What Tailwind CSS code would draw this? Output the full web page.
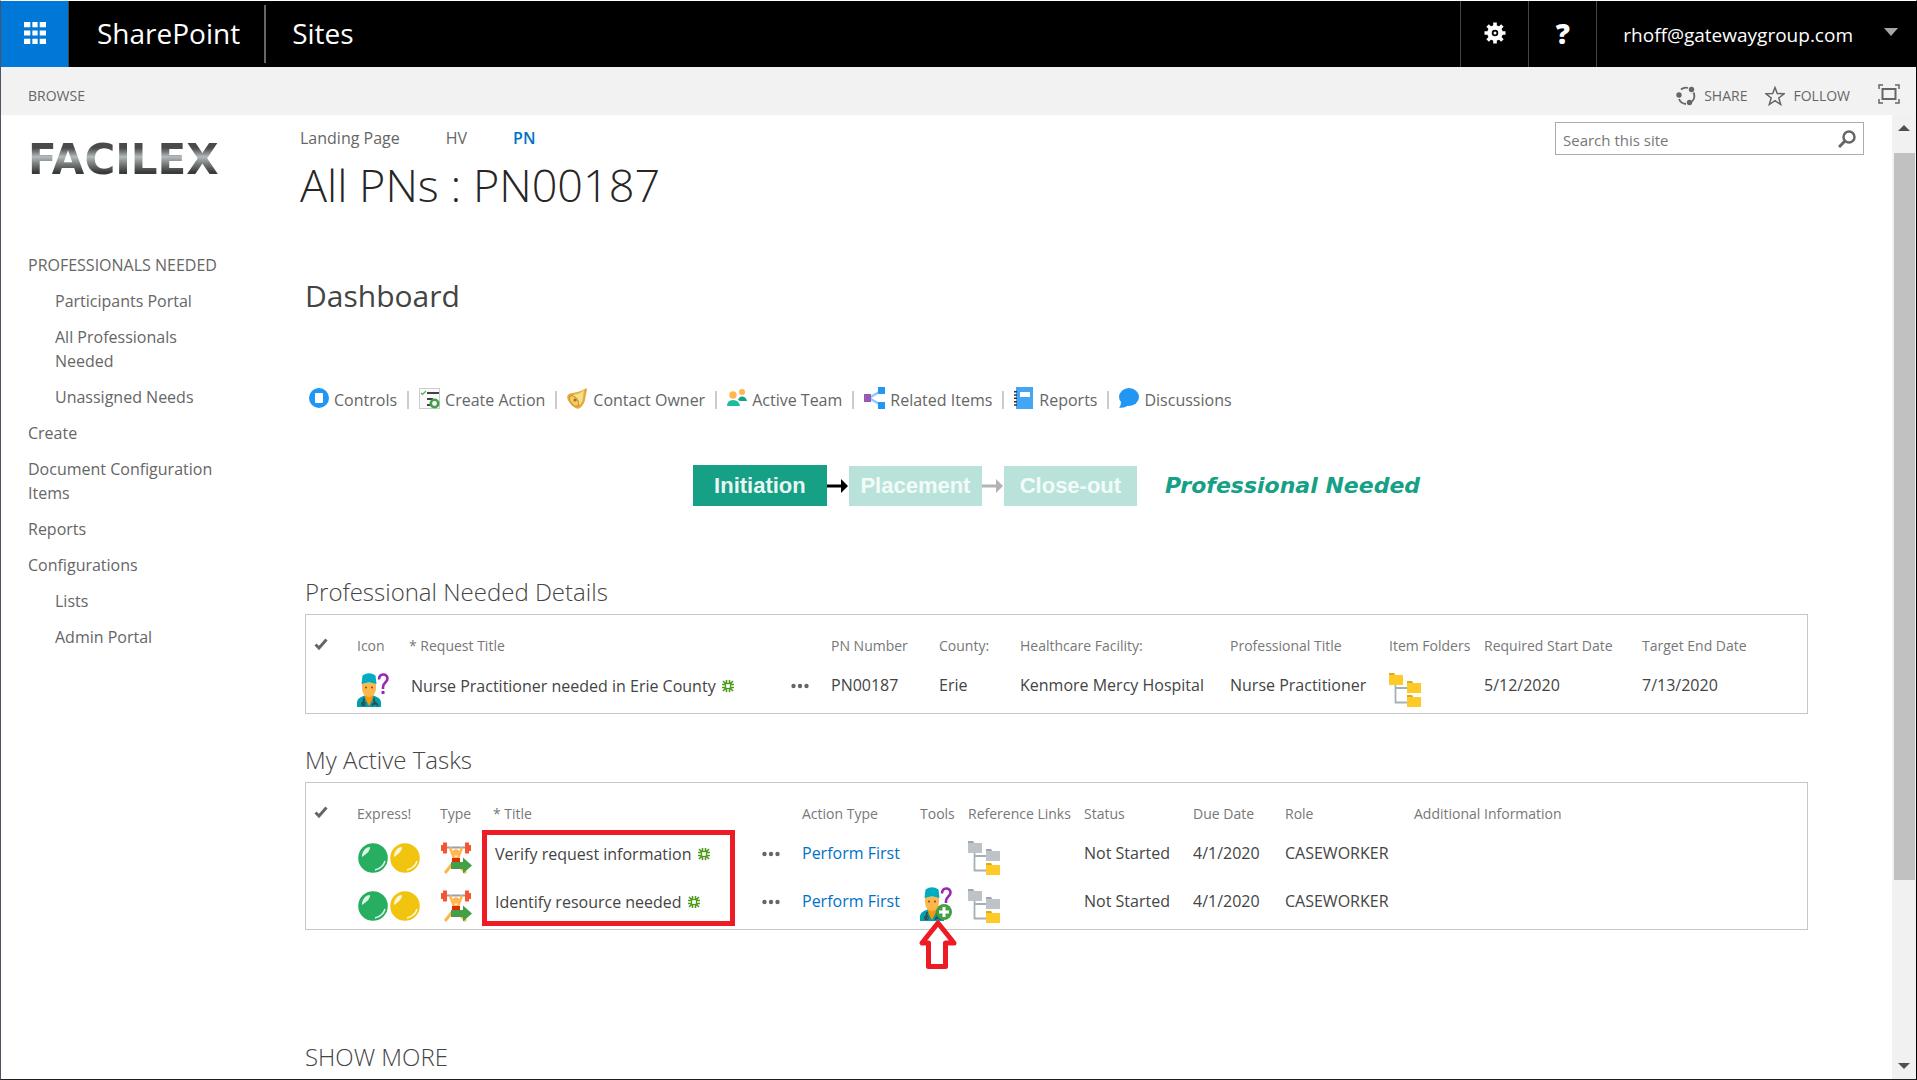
<!DOCTYPE html>
<html lang="en">
<head>
    <meta charset="UTF-8">
    <meta name="viewport" content="width=device-width, initial-scale=1.0">
    <title>All PNs : PN00187</title>
    <script src="https://cdn.jsdelivr.net/npm/@tailwindcss/browser@4"></script>
</head>
<body class="bg-white font-['Open_Sans','Noto_Sans',sans-serif] text-base text-[#666666]">
    <!-- Shared icons -->
    <svg class="hidden">
        <symbol id="check" viewBox="0 0 14 12">
            <path d="M1.500 6.500 5 10 12.500 1.500" fill="none" stroke="#666" stroke-width="3"/>
        </symbol>
        <symbol id="new-item" viewBox="0 0 12 12">
            <path d="M1 1l3 3M11 1 8 4M1 11l3-3M11 11 8 8M4.500 0v3M7.500 0v3M4.500 12V9M7.500 12V9M0 4.500h3M0 7.500h3M12 4.500H9M12 7.500H9" stroke="#4f9a1b" stroke-width="1.600"/>
            <rect x="3.500" y="3.500" width="5" height="5" fill="none" stroke="#4f9a1b" stroke-width="1.300"/>
        </symbol>
        <symbol id="dots" viewBox="0 0 18 6">
            <circle cx="2.500" cy="3" r="2.200" fill="#666"/><circle cx="9" cy="3" r="2.200" fill="#666"/><circle cx="15.500" cy="3" r="2.200" fill="#666"/>
        </symbol>
        <symbol id="nurse" viewBox="0 0 32 34">
            <path d="M0 34v-4c0-4 3-6 8-7.500h8c5 1.500 8 3.500 8 7.500v4z" fill="#00a0ae"/>
            <path d="M7.500 21h9l-1 5-3.500 7-3.500-7z" fill="#ff9800"/>
            <path d="M5 10h14v5c0 5-3 9-7 9s-7-4-7-9z" fill="#ffb74d"/>
            <path d="M4.500 11 5.500 2.500Q12-2 18.500 2.500l1 8.500q-7.500-3-15 0z" fill="#00acc1"/>
            <circle cx="9" cy="14.500" r="1" fill="#784719"/><circle cx="15" cy="14.500" r="1" fill="#784719"/>
            <path d="M7 25c0 3-1 4-1 7M17 25c0 3 1 4 1 7" fill="none" stroke="#37474f" stroke-width="1.600"/>
            <circle cx="6.500" cy="31" r="1.800" fill="none" stroke="#37474f" stroke-width="1.200"/>
            <path d="M15.500 33c0-4 5-4 5 0" fill="none" stroke="#37474f" stroke-width="1.600"/>
            <path d="M22 6.500C22 0 30.500 0 30.500 5.500c0 4-4.500 4-4.500 8.500v2" fill="none" stroke="#9c27b0" stroke-width="2.600"/>
            <rect x="24.500" y="18" width="3" height="3" fill="#9c27b0"/>
        </symbol>
        <symbol id="weights" viewBox="0 0 32 34">
            <path d="M2 6.500h28" stroke="#90a4ae" stroke-width="2"/>
            <path d="M3 1.500h4v11H3zM25 1.500h4v11h-4zM1 4h2v6H1zM29 4h2v6h-2z" fill="#f4562f"/>
            <path d="M10 6.500 14 17h4l4-10.500" fill="none" stroke="#ffb74d" stroke-width="2.600"/>
            <circle cx="16" cy="11.500" r="3.200" fill="#ffb74d"/>
            <path d="M13 22 5 32M18 24l8 8" stroke="#ffb74d" stroke-width="3"/>
            <path d="M12 17h8v6h-8z" fill="#dd2c00"/>
            <path d="M11 21h12v-4.500l9 8-9 8V28H11z" fill="#43a047"/>
        </symbol>
        <symbol id="ball-green" viewBox="0 0 32 32">
            <circle cx="16" cy="16" r="14.800" fill="#27ae60"/>
            <path d="M5 13Q7 5 13 5q1 4-8 10z" fill="#fff" opacity=".85"/>
            <path d="M18 28q8-2 10-9" fill="none" stroke="#fff" stroke-width="1.500" opacity=".85"/>
        </symbol>
        <symbol id="ball-yellow" viewBox="0 0 32 32">
            <circle cx="16" cy="16" r="14.800" fill="#f1c40f"/>
            <path d="M5 13Q7 5 13 5q1 4-8 10z" fill="#fff" opacity=".85"/>
            <path d="M18 28q8-2 10-9" fill="none" stroke="#fff" stroke-width="1.500" opacity=".85"/>
        </symbol>
        <symbol id="folder" viewBox="0 0 14 12">
            <path d="M0 0h5l1.500 2H13v5H0z" fill="currentColor"/>
            <path d="M0 2h14v10H0z" fill="currentColor"/>
            <path d="M0 0h5l1 2H0z" fill="#000" opacity=".15"/>
        </symbol>
        <symbol id="tree-lines" viewBox="0 0 32 34">
            <path d="M6.500 11v18.500H20M6.500 15H20" fill="none" stroke="#a3b2ba" stroke-width="1.800"/>
        </symbol>
    </svg>

    <div class="flex h-screen flex-col border-x border-b border-t border-t-white border-r-black border-b-[#1f1f1f] border-l-[#4b5563]">
        <!-- Suite bar -->
        <header class="flex h-[66px] shrink-0 items-stretch bg-black text-white">
            <button type="button" aria-label="App launcher" class="flex w-[68px] items-center justify-center border-r border-[#444444] bg-[#0078d7] pb-0.5">
                <svg class="h-[22px] w-[22px]" viewBox="0 0 21 21" fill="#fff">
                    <path d="M0 0h6v5H0zM8 0h5v5H8zM15 0h6v5h-6zM0 8h6v5H0zM8 8h5v5H8zM15 8h6v5h-6zM0 16h6v5H0zM8 16h5v5H8zM15 16h6v5h-6z"/>
                </svg>
            </button>
            <a href="#" class="flex items-center pb-0.5 pl-7 text-[28px]">SharePoint</a>
            <span class="my-1 ml-6 w-[2px] self-stretch bg-[#666666]"></span>
            <a href="#" class="flex items-center pb-0.5 pl-[26px] text-[28px]">Sites</a>
            <div class="ml-auto flex">
                <button type="button" aria-label="Settings" class="flex w-[68px] items-center justify-center border-l border-[#444444] pb-0.5">
                    <svg class="h-[22px] w-[22px]" viewBox="0 0 22 22">
                        <circle cx="11" cy="11" r="5.500" fill="none" stroke="#fff" stroke-width="4.500"/>
                        <path d="M11 .5V5M11 17v4.500M.5 11H5M17 11h4.500M3.600 3.600l3 3M15.400 15.400l3 3M3.600 18.400l3-3M15.400 6.600l3-3" stroke="#fff" stroke-width="3.600"/>
                        <circle cx="11" cy="11" r="1.500" fill="#fff"/>
                    </svg>
                </button>
                <button type="button" aria-label="Help" class="flex w-[68px] items-center justify-center border-l border-[#444444] pb-0.5 text-[28px] font-extrabold">?</button>
                <button type="button" class="flex items-center border-l border-[#444444] pl-[26px] pr-[18px] pt-0.5 text-[19px]">
                    rhoff@gatewaygroup.com
                    <svg class="mb-1.5 ml-[31px] h-2 w-[14px]" viewBox="0 0 14 8"><path d="M0 0h14L7 8z" fill="#a6a6a6"/></svg>
                </button>
            </div>
        </header>

        <!-- Ribbon -->
        <div class="flex h-12 shrink-0 items-center bg-[#f2f2f2] pl-[27px] pr-4 pt-2.5 text-sm">
            <a href="#" class="mr-auto">BROWSE</a>
            <button type="button" class="flex items-center gap-2">
                <svg class="h-5 w-5" viewBox="0 0 20 20">
                    <path d="M5 3.500A8 8 0 0 1 12 2M17.500 6.500A8 8 0 0 1 16 15.500M10 18A8 8 0 0 1 3 13" fill="none" stroke="#666" stroke-width="1.800"/>
                    <circle cx="15.500" cy="3.500" r="2.700" fill="#666"/><circle cx="3" cy="9" r="2.700" fill="#666"/><circle cx="13.500" cy="16.500" r="2.700" fill="#666"/>
                </svg>
                SHARE
            </button>
            <button type="button" class="ml-[18px] flex items-center gap-2">
                <svg class="h-5 w-5" viewBox="0 0 20 20"><path d="M10 1.500 12.300 7.600 19 7.800 13.800 12l1.900 6.500L10 14.700l-5.700 3.800L6.200 12 1 7.800l6.700-.2z" fill="none" stroke="#666" stroke-width="1.500"/></svg>
                FOLLOW
            </button>
            <button type="button" aria-label="Focus on content" class="mb-1 ml-7">
                <svg class="h-5 w-[22px]" viewBox="0 0 22 20" fill="none" stroke="#666" stroke-width="1.500"><path d="M1 5V1h4M17 1h4v4M1 15v4h4M21 15v4h-4"/><rect x="4.500" y="5" width="13" height="10" stroke-width="2"/></svg>
            </button>
        </div>

        <div class="flex min-h-0 flex-1">
            <!-- Quick launch -->
            <aside class="w-[299px] shrink-0 pl-[27px]">
                <a href="#" class="mt-[22px] flex h-11 w-fit items-center bg-linear-to-b from-[#4a4a4a] from-25% via-[#b4bbbd] via-45% to-[#3a3a3a] to-80% bg-clip-text font-['DejaVu_Sans'] text-[42px] font-bold text-transparent">FACILEX</a>
                <nav class="mt-[66px] w-[210px] leading-6">
                    <a href="#" class="block py-1.5">PROFESSIONALS NEEDED</a>
                    <a href="#" class="ml-[27px] block py-1.5">Participants Portal</a>
                    <a href="#" class="ml-[27px] block py-1.5">All Professionals<br>Needed</a>
                    <a href="#" class="ml-[27px] block py-1.5">Unassigned Needs</a>
                    <a href="#" class="block py-1.5">Create</a>
                    <a href="#" class="block py-1.5">Document Configuration Items</a>
                    <a href="#" class="block py-1.5">Reports</a>
                    <a href="#" class="block py-1.5">Configurations</a>
                    <a href="#" class="ml-[27px] block py-1.5">Lists</a>
                    <a href="#" class="ml-[27px] block py-1.5">Admin Portal</a>
                </nav>
            </aside>

            <main class="min-w-0 flex-1 overflow-hidden">
                <div class="flex items-start justify-between">
                    <div>
                        <nav class="mt-[11px] flex gap-[46px] leading-6">
                            <a href="#">Landing Page</a>
                            <a href="#">HV</a>
                            <a href="#" class="font-semibold text-[#0072c6]">PN</a>
                        </nav>
                        <h1 class="mt-[7px] text-[45px] font-light leading-[56px] text-[#262626]">All PNs : PN00187</h1>
                    </div>
                    <form class="mr-7 mt-[7px] flex h-[33px] w-[309px] items-center border border-[#ababab]">
                        <input type="text" aria-label="Search this site" placeholder="Search this site" class="h-full min-w-0 flex-1 pl-[7px] pt-0.5 text-[15px] outline-none placeholder:text-[#777777]">
                        <button type="submit" aria-label="Search" class="pr-[7px]">
                            <svg class="h-[18px] w-[18px]" viewBox="0 0 18 18" fill="none" stroke="#666"><circle cx="11" cy="7" r="5.500" stroke-width="2.500"/><path d="m7 11-6 6" stroke-width="3"/></svg>
                        </button>
                    </form>
                </div>

                <div class="ml-[5px] mr-[84px]">
                    <h2 class="mt-[61px] text-3xl leading-[44px] text-[#444444]">Dashboard</h2>

                    <!-- Toolbar -->
                    <div class="mt-[70px] flex h-6 items-center gap-2.5 pl-1 leading-6 whitespace-nowrap">
                        <a href="#" class="flex items-center gap-[5px]">
                            <svg class="mb-1 h-5 w-5" viewBox="0 0 20 20"><circle cx="10" cy="10" r="10" fill="#2196f3"/><rect x="6" y="5" width="8" height="10" rx="1" fill="#fff"/></svg>
                            Controls
                        </a>
                        <span class="h-[18px] w-[2px] bg-[#cccccc]"></span>
                        <a href="#" class="flex items-center gap-[5px]">
                            <svg class="mb-1 h-[21px] w-[21px]" viewBox="0 0 21 21"><rect x=".5" y=".5" width="20" height="20" fill="#fafafa" stroke="#ccc"/><path d="m2 5 1.500 1.500L7 3" fill="none" stroke="#4caf50" stroke-width="1.200"/><path d="M8 5h12M8 11h6M8 17h6" stroke="#444" stroke-width="2.200"/><circle cx="15.500" cy="15.500" r="3.700" fill="#fff" stroke="#43a047" stroke-width="2.600"/></svg>
                            Create Action
                        </a>
                        <span class="h-[18px] w-[2px] bg-[#cccccc]"></span>
                        <a href="#" class="flex items-center gap-[5px]">
                            <svg class="mb-1 h-[21px] w-[21px]" viewBox="0 0 21 21"><path d="M19.500 0c1 3-.5 5-1 9-.5 5-2 8-5.500 11-3 2-7-1-10-5C0 12-1 8 2 6c5-2 10-1 17.500-6z" fill="#e3ac3a"/><path d="M17 2c-1 5 0 10-4 15L6 7c4-1 8-2 11-5z" fill="#f9dc86"/><ellipse cx="7" cy="13" rx="3.500" ry="6" transform="rotate(-38 7 13)" fill="#f4cb62" stroke="#c58f27"/><circle cx="8" cy="12" r="1.600" fill="#a8741b"/></svg>
                            Contact Owner
                        </a>
                        <span class="h-[18px] w-[2px] bg-[#cccccc]"></span>
                        <a href="#" class="flex items-center gap-[5px]">
                            <svg class="mb-1 h-5 w-5" viewBox="0 0 20 20"><circle cx="6" cy="7" r="3.700" fill="#ffb74d"/><circle cx="15" cy="4" r="3" fill="#ffb74d"/><path d="M0 18q0-6 6-6t7 6z" fill="#1abc9c"/><path d="M11 12q1-3.500 4-3.500 4 0 5 4.500h-7z" fill="#16a085"/></svg>
                            Active Team
                        </a>
                        <span class="h-[18px] w-[2px] bg-[#cccccc]"></span>
                        <a href="#" class="flex items-center gap-[5px]">
                            <svg class="mb-1 h-[22px] w-[21px]" viewBox="0 0 21 22"><path d="M17 4 5 11l12 7" fill="none" stroke="#90caf9" stroke-width="2.500"/><path d="M0 7h7v8H0z" fill="#9b59b6"/><path d="M14 0h7v7h-7zM14 15h7v7h-7z" fill="#2196f3"/></svg>
                            Related Items
                        </a>
                        <span class="h-[18px] w-[2px] bg-[#cccccc]"></span>
                        <a href="#" class="flex items-center gap-[5px]">
                            <svg class="mb-1 h-[22px] w-5" viewBox="0 0 20 22"><path d="M2 0h17v22H2z" fill="#42a5f5"/><path d="M6 5h10v5H6z" fill="#fff"/><path d="M1.500 4v15" stroke="#333" stroke-width="3" stroke-dasharray="1.500 1.800"/></svg>
                            Reports
                        </a>
                        <span class="h-[18px] w-[2px] bg-[#cccccc]"></span>
                        <a href="#" class="flex items-center gap-[5px]">
                            <svg class="mb-1 h-5 w-5" viewBox="0 0 20 20"><ellipse cx="10" cy="9" rx="10" ry="9" fill="#2196f3"/><path d="M2 13q0 5-2 6.500 5 1 9-2z" fill="#2196f3"/></svg>
                            Discussions
                        </a>
                    </div>

                    <!-- Workflow stages -->
                    <div class="mt-[53px] flex h-[41px] items-center justify-center font-['Liberation_Sans'] text-[22px] font-bold whitespace-nowrap">
                        <div class="flex h-[41px] w-[134px] items-center justify-center bg-[#16a085] text-[#e8f6f3]">Initiation</div>
                        <svg class="h-4 w-[22px]" viewBox="0 0 22 16"><path d="M0 8h16" stroke="#000" stroke-width="3"/><path d="m14 1 7 7-7 7z"/></svg>
                        <div class="flex h-10 w-[133px] items-center justify-center bg-[#b9e3da] text-[#f3fbf9]">Placement</div>
                        <svg class="h-4 w-[22px]" viewBox="0 0 22 16" fill="#b3b3b3"><path d="M0 8h16" stroke="#b3b3b3" stroke-width="3"/><path d="m14 1 7 7-7 7z"/></svg>
                        <div class="flex h-10 w-[133px] items-center justify-center bg-[#b9e3da] text-[#f3fbf9]">Close-out</div>
                        <div class="ml-7 font-['DejaVu_Sans'] italic text-[#16a085]">Professional Needed</div>
                    </div>

                    <!-- Details -->
                    <h3 class="mt-[68px] text-2xl font-light leading-9 text-[#444444]">Professional Needed Details</h3>
                    <div class="mt-1 h-[100px] border border-[#c6c6c6] pt-[15px]">
                        <table class="w-full table-fixed text-left whitespace-nowrap text-[#444444]">
                            <colgroup>
                                <col class="w-[51px]"><col class="w-[52px]"><col class="w-[382px]"><col class="w-[40px]"><col class="w-[108px]"><col class="w-[81px]"><col class="w-[210px]"><col class="w-[159px]"><col class="w-[95px]"><col class="w-[158px]"><col>
                            </colgroup>
                            <thead class="text-sm leading-8 text-[#777777]">
                                <tr>
                                    <th class="pl-2"><svg class="mb-1 h-3 w-[14px]"><use href="#check"/></svg></th>
                                    <th class="font-normal">Icon</th>
                                    <th class="font-normal">* Request Title</th>
                                    <th></th>
                                    <th class="font-normal">PN Number</th>
                                    <th class="font-normal">County:</th>
                                    <th class="font-normal">Healthcare Facility:</th>
                                    <th class="font-normal">Professional Title</th>
                                    <th class="font-normal">Item Folders</th>
                                    <th class="font-normal">Required Start Date</th>
                                    <th class="font-normal">Target End Date</th>
                                </tr>
                            </thead>
                            <tbody class="leading-6">
                                <tr class="h-12">
                                    <td></td>
                                    <td><svg class="mt-2 h-[34px] w-8"><use href="#nurse"/></svg></td>
                                    <td class="pl-0.5"><a href="#" class="flex items-center gap-1.5">Nurse Practitioner needed in Erie County <svg class="h-3 w-3"><use href="#new-item"/></svg></a></td>
                                    <td><button type="button" aria-label="Open menu" class="block"><svg class="h-1.5 w-[18px]"><use href="#dots"/></svg></button></td>
                                    <td class="pb-0.5">PN00187</td>
                                    <td class="pb-0.5">Erie</td>
                                    <td class="pb-0.5">Kenmore Mercy Hospital</td>
                                    <td class="pb-0.5">Nurse Practitioner</td>
                                    <td>
                                        <svg class="mt-2 h-[34px] w-8" viewBox="0 0 32 34"><use href="#tree-lines" width="32" height="34"/><g color="#ffca28"><use href="#folder" width="14" height="12"/><use href="#folder" x="18" y="8" width="14" height="12"/><use href="#folder" x="18" y="22" width="14" height="12"/></g></svg>
                                    </td>
                                    <td class="pb-0.5">5/12/2020</td>
                                    <td class="pb-0.5">7/13/2020</td>
                                </tr>
                            </tbody>
                        </table>
                    </div>

                    <!-- Tasks -->
                    <h3 class="mt-7 text-2xl font-light leading-9 text-[#444444]">My Active Tasks</h3>
                    <div class="relative mt-1 h-[148px] border border-[#c6c6c6] pt-[15px]">
                        <table class="w-full table-fixed text-left whitespace-nowrap text-[#444444]">
                            <colgroup>
                                <col class="w-[51px]"><col class="w-[83px]"><col class="w-[53px]"><col class="w-[269px]"><col class="w-[40px]"><col class="w-[118px]"><col class="w-[48px]"><col class="w-[116px]"><col class="w-[109px]"><col class="w-[92px]"><col class="w-[129px]"><col>
                            </colgroup>
                            <thead class="text-sm leading-8 text-[#777777]">
                                <tr>
                                    <th class="pl-2"><svg class="mb-1 h-3 w-[14px]"><use href="#check"/></svg></th>
                                    <th class="font-normal">Express!</th>
                                    <th class="font-normal">Type</th>
                                    <th class="font-normal">* Title</th>
                                    <th></th>
                                    <th class="font-normal">Action Type</th>
                                    <th class="font-normal">Tools</th>
                                    <th class="font-normal">Reference Links</th>
                                    <th class="font-normal">Status</th>
                                    <th class="font-normal">Due Date</th>
                                    <th class="font-normal">Role</th>
                                    <th class="font-normal">Additional Information</th>
                                </tr>
                            </thead>
                            <tbody class="leading-6">
                                <tr class="h-12">
                                    <td></td>
                                    <td><span class="mt-2 flex"><svg class="h-8 w-8"><use href="#ball-green"/></svg><svg class="h-8 w-8"><use href="#ball-yellow"/></svg></span></td>
                                    <td><svg class="mt-2 h-[34px] w-8"><use href="#weights"/></svg></td>
                                    <td class="pl-0.5"><a href="#" class="flex items-center gap-1.5">Verify request information <svg class="h-3 w-3"><use href="#new-item"/></svg></a></td>
                                    <td><button type="button" aria-label="Open menu" class="block"><svg class="h-1.5 w-[18px]"><use href="#dots"/></svg></button></td>
                                    <td class="pb-0.5"><a href="#" class="text-[#0072c6]">Perform First</a></td>
                                    <td></td>
                                    <td>
                                        <svg class="mt-2 h-[34px] w-8" viewBox="0 0 32 34"><use href="#tree-lines" width="32" height="34"/><g color="#bdc3c7"><use href="#folder" width="14" height="12"/><use href="#folder" x="18" y="8" width="14" height="12"/></g><use href="#folder" x="18" y="22" width="14" height="12" color="#ffca28"/></svg>
                                    </td>
                                    <td class="pb-0.5">Not Started</td>
                                    <td class="pb-0.5">4/1/2020</td>
                                    <td class="pb-0.5">CASEWORKER</td>
                                    <td></td>
                                </tr>
                                <tr class="h-12">
                                    <td></td>
                                    <td><span class="mt-2 flex"><svg class="h-8 w-8"><use href="#ball-green"/></svg><svg class="h-8 w-8"><use href="#ball-yellow"/></svg></span></td>
                                    <td><svg class="mt-2 h-[34px] w-8"><use href="#weights"/></svg></td>
                                    <td class="pl-0.5"><a href="#" class="flex items-center gap-1.5">Identify resource needed <svg class="h-3 w-3"><use href="#new-item"/></svg></a></td>
                                    <td><button type="button" aria-label="Open menu" class="block"><svg class="h-1.5 w-[18px]"><use href="#dots"/></svg></button></td>
                                    <td class="pb-0.5"><a href="#" class="text-[#0072c6]">Perform First</a></td>
                                    <td>
                                        <div class="relative mt-1 w-8">
                                            <svg class="h-[34px] w-8" viewBox="0 0 32 34"><use href="#nurse" width="32" height="34"/><circle cx="24" cy="25" r="8" fill="#43a047"/><path d="M24 20v10M19 25h10" stroke="#fff" stroke-width="3"/></svg>
                                            <svg class="absolute -left-0.5 top-8 h-[51px] w-10" viewBox="0 0 40 51"><path d="M20 4 4 24h6.500v23.500h17V24H36z" fill="#fff" stroke="#ed1c24" stroke-width="5" stroke-linejoin="round"/></svg>
                                        </div>
                                    </td>
                                    <td>
                                        <svg class="mt-2 h-[34px] w-8" viewBox="0 0 32 34"><use href="#tree-lines" width="32" height="34"/><g color="#bdc3c7"><use href="#folder" width="14" height="12"/><use href="#folder" x="18" y="8" width="14" height="12"/></g><use href="#folder" x="18" y="22" width="14" height="12" color="#ffca28"/></svg>
                                    </td>
                                    <td class="pb-0.5">Not Started</td>
                                    <td class="pb-0.5">4/1/2020</td>
                                    <td class="pb-0.5">CASEWORKER</td>
                                    <td></td>
                                </tr>
                            </tbody>
                        </table>
                        <!-- Callout around the task titles -->
                        <div class="pointer-events-none absolute left-[176px] top-[47px] h-24 w-[253px] border-5 border-[#ed1c24]"></div>
                    </div>

                    <h3 class="mt-[109px] text-2xl font-light leading-9 text-[#444444]">SHOW MORE</h3>
                </div>
            </main>

            <!-- Scrollbar -->
            <div class="flex w-6 shrink-0 flex-col items-center bg-[#f1f1f1] py-2.5">
                <svg class="h-1.5 w-3" viewBox="0 0 12 6"><path d="M0 6h12L6 0z" fill="#505050"/></svg>
                <div class="mt-[22px] mb-auto h-[77%] w-[21px] bg-[#c1c1c1]"></div>
                <svg class="h-1.5 w-3" viewBox="0 0 12 6"><path d="M0 0h12L6 6z" fill="#505050"/></svg>
            </div>
        </div>
    </div>
</body>
</html>
